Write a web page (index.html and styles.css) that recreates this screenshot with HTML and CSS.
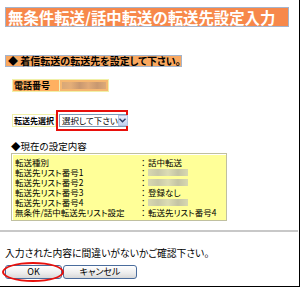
FILE: index.html
```html
<!DOCTYPE html>
<html lang="ja">
<head>
<meta charset="utf-8">
<link rel="stylesheet" href="styles.css">
</head>
<body>
<div class="page">
  <div class="title">無条件転送/話中転送の転送先設定入力</div>
  <div class="notice">◆ 着信転送の転送先を設定して下さい。</div>
  <div class="phone">
    <div class="phone-label">電話番号</div>
    <div class="phone-value"><span class="blur b1"></span></div>
  </div>
  <div class="select-row">
    <div class="select-label">転送先選択</div>
    <div class="select-wrap">
      <div class="select">
        <span class="select-text">選択して下さい</span>
        <span class="select-btn"><svg width="7" height="5" viewBox="0 0 7 5"><path d="M0.5 0.8 L3.5 3.8 L6.5 0.8" fill="none" stroke="#2b3f6b" stroke-width="1.4"/></svg></span>
      </div>
    </div>
  </div>
  <div class="current-head">◆現在の設定内容</div>
  <div class="current">
    <div class="row"><span class="k">転送種別</span><span class="c">：</span><span class="v">話中転送</span></div>
    <div class="row"><span class="k">転送先リスト番号1</span><span class="c">：</span><span class="blur b2"></span></div>
    <div class="row"><span class="k">転送先リスト番号2</span><span class="c">：</span><span class="blur b2"></span></div>
    <div class="row"><span class="k">転送先リスト番号3</span><span class="c">：</span><span class="v">登録なし</span></div>
    <div class="row"><span class="k">転送先リスト番号4</span><span class="c">：</span><span class="blur b2"></span></div>
    <div class="row"><span class="k">無条件/話中転送先リスト設定</span><span class="c">：</span><span class="v">転送先リスト番号4</span></div>
  </div>
  <div class="rule"></div>
  <div class="confirm">入力された内容に間違いがないかご確認下さい。</div>
  <div class="buttons">
    <button class="btn ok">OK</button>
    <button class="btn cancel">キャンセル</button>
    <span class="ring"></span>
  </div>
</div>
</body>
</html>
```
FILE: styles.css
```css
* { box-sizing: border-box; }
html, body { margin: 0; padding: 0; background: #fff; }
body {
  width: 300px;
  height: 287px;
  overflow: hidden;
  font-family: "Noto Sans CJK JP", "Noto Sans", sans-serif;
  font-feature-settings: "palt";
  color: #000;
}
.page {
  width: 300px;
  height: 287px;
  border-right: 1px solid #000;
  border-bottom: 1px solid #000;
  padding-top: 7px;
  position: relative;
}
.title {
  margin-left: 5px;
  width: 284px;
  height: 20px;
  background: #f7884a;
  border: 1px solid #a4b4cc;
  color: #fff;
  font-size: 15.4px;
  font-weight: bold;
  line-height: 18px;
  padding-left: 2px;
  white-space: nowrap;
  overflow: hidden;
}
.notice {
  margin-top: 28px;
  margin-left: 5px;
  width: 177px;
  height: 12px;
  background: #f9a860;
  border: 1px solid #a4b4cc;
  font-size: 10px;
  font-weight: bold;
  line-height: 10px;
  padding-left: 2px;
  white-space: nowrap;
}
.phone {
  margin-top: 12px;
  margin-left: 12px;
  width: 97px;
  height: 13px;
  display: flex;
  gap: 1px;
  border: 1px solid #f0f0a8;
  background: #f0f0b8;
}
.phone-label {
  width: 46px;
  background: #ffb060;
  font-size: 9px;
  font-weight: bold;
  line-height: 11px;
  padding-left: 1px;
}
.phone-value {
  flex: 1;
  background: #f6b870;
  display: flex;
  align-items: center;
  padding-left: 2px;
}
.blur { display: inline-block; height: 7px; }
.b1 {
  width: 44px;
  background: linear-gradient(90deg, #d8a878, #e4ae78 20%, #c89870 40%, #e0aa78 60%, #c89870 80%, #dcaa78);
}
.select-row {
  margin-top: 18px;
  margin-left: 12px;
  display: flex;
  align-items: center;
}
.select-label {
  width: 44px;
  height: 13px;
  border: 1px solid #f0f0a8;
  background: #fff;
  font-size: 8px;
  font-weight: bold;
  line-height: 11px;
  padding-left: 1px;
  white-space: nowrap;
  overflow: hidden;
}
.select-wrap {
  border: 2px solid #e8100c;
  padding: 2px 2px 2px 1px;
  width: 72px;
  height: 21px;
}
.select {
  width: 67px;
  height: 13px;
  border: 1px solid #7f9db9;
  background: #fff;
  display: flex;
  align-items: center;
  justify-content: space-between;
  padding-left: 2px;
}
.select-text { font-size: 8.5px; line-height: 11px; white-space: nowrap; }
.select-btn {
  width: 10px;
  height: 11px;
  flex: none;
  background: linear-gradient(#e8eefb, #c4d3f3);
  border: 1px solid #b4c4e4;
  display: flex;
  align-items: center;
  justify-content: center;
}
.current-head {
  margin-top: 10px;
  margin-left: 11px;
  font-size: 9.5px;
  line-height: 11px;
  white-space: nowrap;
}
.current {
  margin-top: 1px;
  margin-left: 11px;
  width: 216px;
  height: 68px;
  background: #ffff98;
  border: 1px solid #c0c0a0;
  box-shadow: inset 1px 1px 0 #fff;
  padding: 3px 0 0 3px;
}
.row {
  display: flex;
  align-items: center;
  height: 10px;
  font-size: 8.5px;
  line-height: 10px;
  white-space: nowrap;
}
.k { width: 126px; }
.c { width: 7px; }
.b2 {
  width: 40px;
  height: 7px;
  background: linear-gradient(90deg, #d8d8b0, #c8c8a8 25%, #dcdcb4 50%, #c4c4a4 75%, #d8d8b0);
}
.rule {
  margin-top: 9px;
  width: 298px;
  height: 2px;
  background: #c8c8c8;
}
.confirm {
  margin-top: 15px;
  margin-left: 5px;
  font-size: 9.8px;
  line-height: 12px;
  white-space: nowrap;
}
.buttons {
  margin-top: 6px;
  margin-left: 5px;
  display: flex;
  gap: 1px;
  position: relative;
}
.btn {
  height: 14px;
  padding: 0;
  border: 1px solid #4a6c9c;
  border-radius: 3px;
  background: linear-gradient(#ffffff, #ececec 60%, #d8d8d8);
  font-family: "Noto Sans CJK JP", sans-serif;
  font-feature-settings: "palt";
  font-size: 9px;
  line-height: 12px;
  color: #000;
}
.ok { width: 57px; }
.cancel { width: 74px; }
.ring {
  position: absolute;
  left: -3px;
  top: -3px;
  width: 62px;
  height: 20px;
  border: 2px solid #e8100c;
  border-radius: 50%;
}
```
